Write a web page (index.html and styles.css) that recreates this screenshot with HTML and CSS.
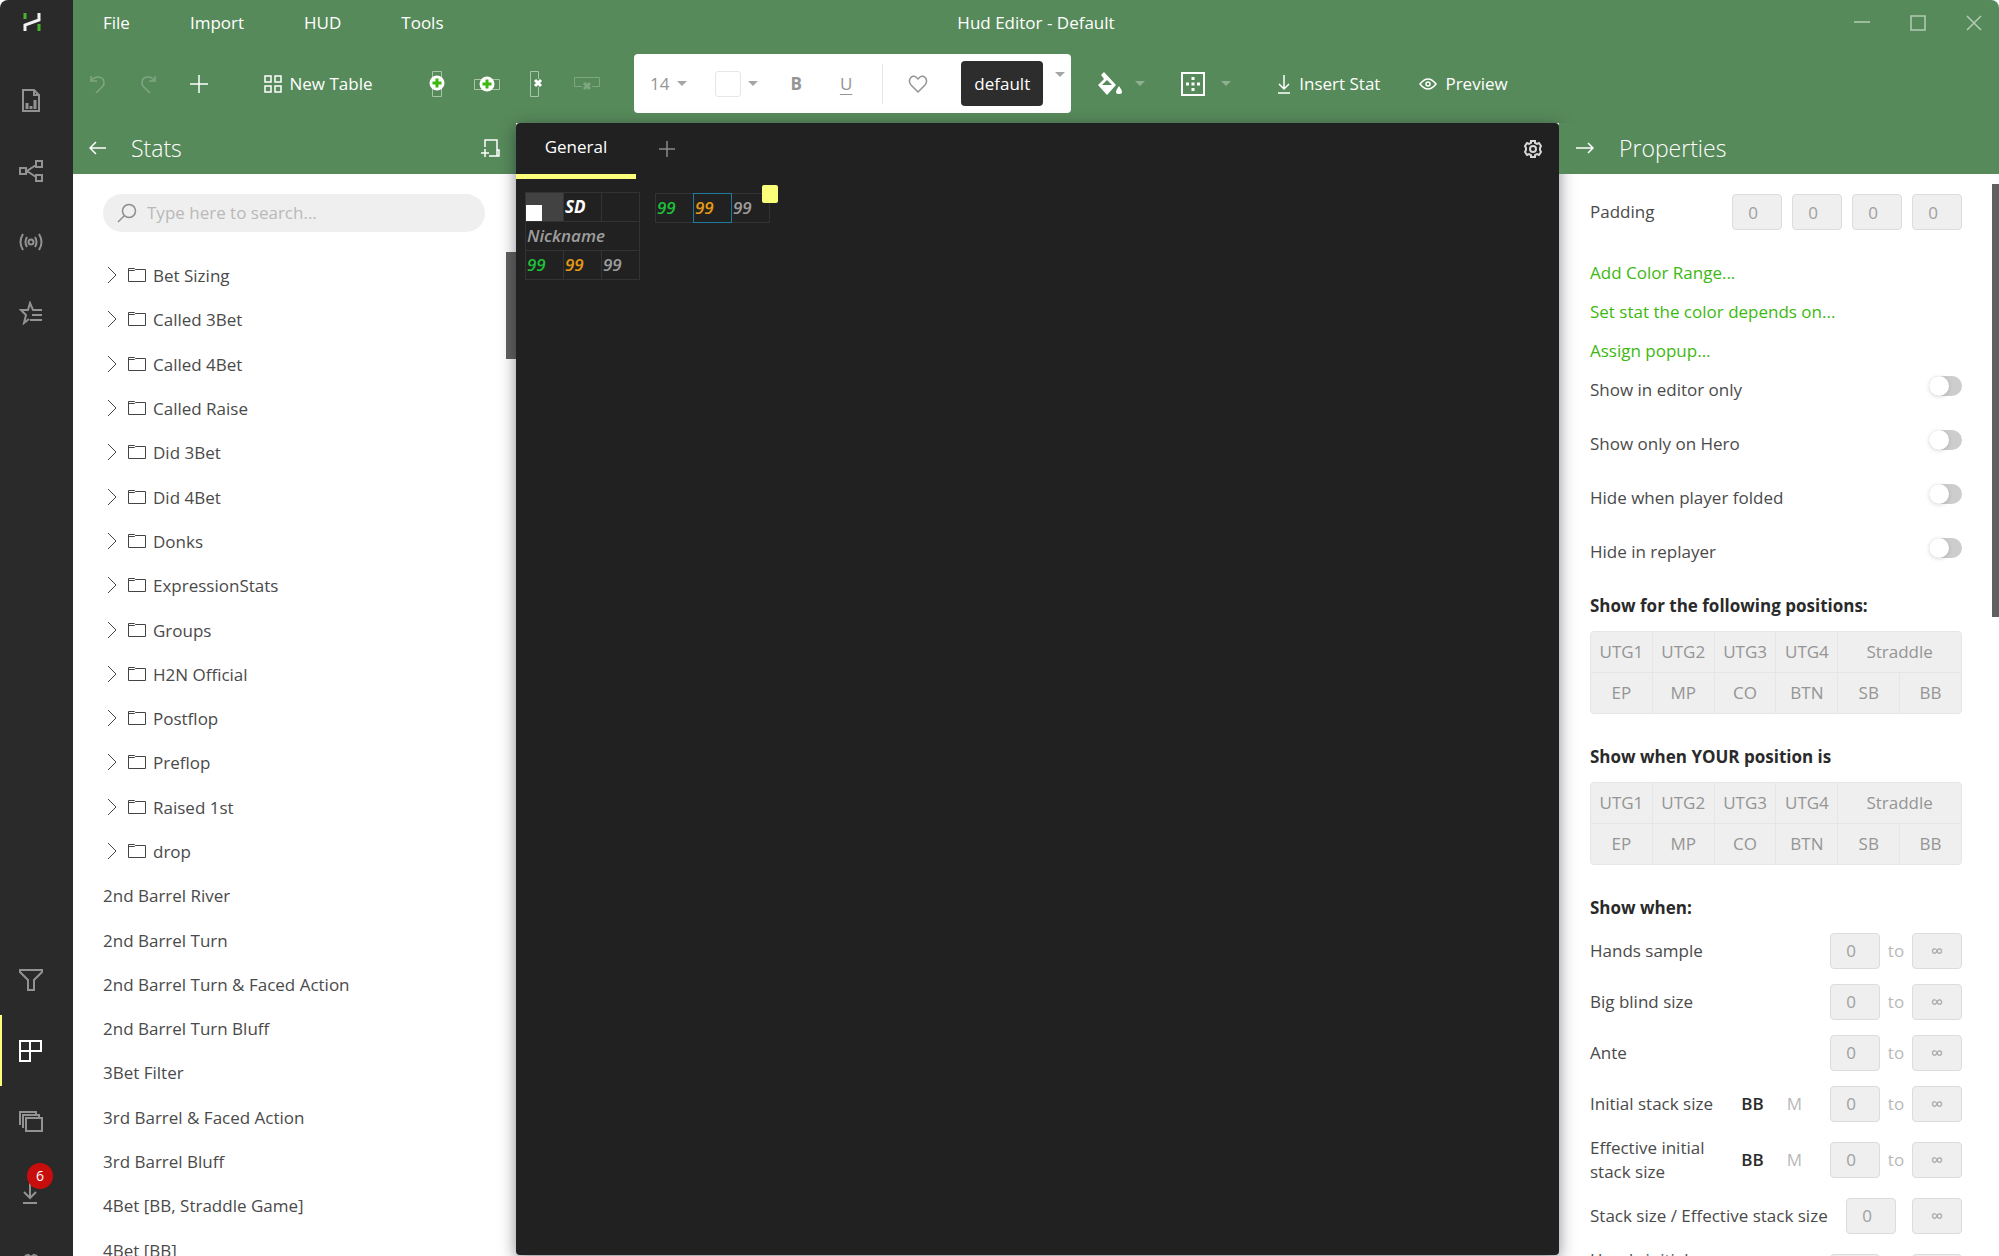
FILE: index.html
```html
<!DOCTYPE html>
<html lang="en">
<head>
<meta charset="UTF-8">
<meta name="viewport" content="width=device-width, initial-scale=1.0">
<title>Hud Editor - Default</title>
<link rel="stylesheet" href="styles.css">
</head>
<body>
<div class="app">

<nav class="rail">
    <a href="#" class="logo" aria-label="Home"><svg width="18" height="20" viewBox="0 0 18 20" fill="none" stroke-width="3"><path stroke="#4ab52c" d="M2 1v6M16 12v7"/><path stroke="#f2f2f2" d="M16 1v7L2 13v6"/></svg></a>
    <a href="#" aria-label="Reports"><svg width="24" height="24" viewBox="0 0 24 24" fill="none" stroke="currentColor" stroke-width="2"><path d="M4 2h11l5 5v16H4zM15 2v5h5"/><path stroke-width="3" d="M8 21v-6M12 21v-3M16 21v-9"/></svg></a>
    <a href="#" aria-label="Share"><svg width="24" height="24" viewBox="0 0 24 24" fill="none" stroke="currentColor" stroke-width="2"><path d="M1 9h6v6H1zM17 2h6v6h-6zM17 16h6v6h-6zM17 6L8 12l9 6"/></svg></a>
    <a href="#" aria-label="Live"><svg width="24" height="18" viewBox="0 0 24 18" fill="none" stroke="currentColor" stroke-width="2"><circle cx="12" cy="9" r="2.5"/><path d="M4 1q-5 8 0 16M8 4q-3 5 0 10M20 1q5 8 0 16M16 4q3 5 0 10"/></svg></a>
    <a href="#" aria-label="Favorites"><svg width="24" height="24" viewBox="0 0 24 24" fill="none" stroke="currentColor" stroke-width="2"><path d="M23 9h-9l-3-7-2 7H2l5 5-2 8 5-4M13 14h10M11 19h12"/></svg></a>
    <a href="#" class="rail-filter" aria-label="Filter"><svg width="24" height="22" viewBox="0 0 24 22" fill="none" stroke="currentColor" stroke-width="2"><path d="M1 1h22v2l-8 8v10H9V11L1 3z"/></svg></a>
    <a href="#" class="active" aria-label="Hud Editor"><svg width="24" height="24" viewBox="0 0 24 24" fill="none" stroke="currentColor" stroke-width="2"><path d="M2 2h21v10H2zM12 2v20H2V2"/></svg></a>
    <a href="#" aria-label="Tables"><svg width="24" height="22" viewBox="0 0 24 22" fill="none" stroke="currentColor" stroke-width="2"><path d="M7 7h16v13H7zM4 17V4h16v3M1 14V1h16v3"/></svg></a>
    <a href="#" class="downloads" aria-label="Downloads"><svg width="16" height="22" viewBox="0 0 16 22" fill="none" stroke="currentColor" stroke-width="2"><path d="M8 1v15M2 10l6 6 6-6M1 21h14"/></svg><span class="badge">6</span></a>
    <a href="#" aria-label="Settings"><svg width="24" height="22" viewBox="0 0 24 24" fill="none" stroke="currentColor" stroke-width="2"><circle cx="12" cy="12" r="4"/><path d="M9 2l3 2 3-2 3 1v4l4 2v6l-4 2v4l-3 1-3-2-3 2-3-1v-4l-4-2V9l4-2V3z"/></svg></a>
</nav>

<div class="main">
    <header class="header">
        <div class="titlebar">
            <nav class="menu">
                <a href="#">File</a>
                <a href="#">Import</a>
                <a href="#">HUD</a>
                <a href="#">Tools</a>
            </nav>
            <h1>Hud Editor - Default</h1>
            <div class="window-buttons">
                <button aria-label="Minimize"><svg width="16" height="16" viewBox="0 0 16 16" fill="none" stroke="currentColor" stroke-width="1.5"><path d="M0 7h16"/></svg></button>
                <button aria-label="Maximize"><svg width="16" height="16" viewBox="0 0 16 16" fill="none" stroke="currentColor" stroke-width="1.5"><path d="M1 1h14v14H1z"/></svg></button>
                <button aria-label="Close"><svg width="16" height="16" viewBox="0 0 16 16" fill="none" stroke="currentColor" stroke-width="1.5"><path d="M1 1l14 14M15 1L1 15"/></svg></button>
            </div>
        </div>
        <div class="toolbar">
            <div class="tools">
                <button class="faded" aria-label="Undo"><svg width="16" height="20" viewBox="0 0 16 20" fill="none" stroke="currentColor" stroke-width="1.5"><path d="M1 2v5h6M1 7q3-4 7-4 6 0 6 6 0 3-3 5l-5 5"/></svg></button>
                <button class="faded" aria-label="Redo"><svg width="16" height="20" viewBox="0 0 16 20" fill="none" stroke="currentColor" stroke-width="1.5"><path d="M15 2v5H9M15 7q-3-4-7-4-6 0-6 6 0 3 3 5l5 5"/></svg></button>
                <button aria-label="Add"><svg width="18" height="18" viewBox="0 0 18 18" fill="none" stroke="currentColor" stroke-width="1.5"><path d="M9 0v18M0 9h18"/></svg></button>
            </div>
            <button class="new-table"><svg width="18" height="18" viewBox="0 0 18 18" fill="none" stroke="currentColor" stroke-width="1.5"><path d="M1 1h6v6H1zM11 1h6v6h-6zM1 11h6v6H1zM11 11h6v6h-6z"/></svg>New Table</button>
            <div class="cells">
                <button aria-label="Insert row"><svg width="26" height="26" viewBox="0 0 26 26" fill="none"><path stroke="#a8c5aa" d="M8.500.5h9v25h-9z"/><circle cx="13" cy="12" r="7.5" fill="#fff"/><path stroke="#3db810" stroke-width="3" d="M13 7.500v9M8.500 12h9"/></svg></button>
                <button aria-label="Insert column"><svg width="26" height="26" viewBox="0 0 26 26" fill="none"><path stroke="#a8c5aa" d="M.5 8.500h25v10H.5z"/><circle cx="13" cy="13" r="7.500" fill="#fff"/><path stroke="#3db810" stroke-width="3" d="M13 8.500v9M8.500 13h9"/></svg></button>
                <button aria-label="Delete column"><svg width="26" height="26" viewBox="0 0 26 26" fill="none"><path stroke="#a8c5aa" d="M14.500 8V.5h-8v25h8V16"/><path stroke="#fff" stroke-width="3" d="M11 9l6 6M17 9l-6 6"/></svg></button>
                <button class="faded" aria-label="Delete row"><svg width="26" height="26" viewBox="0 0 26 26" fill="none" stroke="currentColor"><path d="M8 15.500H.5v-9h25v9H18"/><path stroke-width="3" d="M10 12l6 6M16 12l-6 6"/></svg></button>
            </div>
            <div class="format">
                <button class="size">14<i class="caret"></i></button>
                <button class="color" aria-label="Text color"><span class="swatch"></span><i class="caret"></i></button>
                <button class="bold">B</button>
                <button class="underline">U</button>
                <span class="divider"></span>
                <button aria-label="Favorite"><svg width="20" height="18" viewBox="0 0 20 18" fill="none" stroke="currentColor" stroke-width="1.5"><path d="M10 17L3 10C-1 5 4-1 8 2l2 2 2-2c4-3 9 3 5 8z"/></svg></button>
                <button class="style">default</button>
                <button class="style-more" aria-label="More styles"><i class="caret"></i></button>
            </div>
            <button class="fill" aria-label="Fill color"><svg width="26" height="24" viewBox="0 0 26 24"><path fill="currentColor" d="M7 0l12 13-9 10L1 13l6-6-3-4zM22 14q6 8 0 8t0-8"/><path fill="#578a5a" d="M5 13l5-5 5 5z"/></svg><i class="caret"></i></button>
            <button class="border" aria-label="Borders"><svg width="24" height="24" viewBox="0 0 24 24" fill="none" stroke="currentColor" stroke-width="2"><path d="M1 1h22v22H1z"/><path stroke-width="3" stroke-dasharray="3 2.500" d="M12 5v14M5 12h14"/></svg><i class="caret"></i></button>
            <button class="insert"><svg width="14" height="20" viewBox="0 0 14 20" fill="none" stroke="currentColor" stroke-width="1.500"><path d="M7 1v14M2 10l5 5 5-5M1 19h12"/></svg>Insert Stat</button>
            <button class="preview"><svg width="18" height="12" viewBox="0 0 18 12" fill="none" stroke="currentColor" stroke-width="1.500"><path d="M1 6q8-10 16 0-8 10-16 0z"/><circle cx="9" cy="6" r="2"/></svg>Preview</button>
        </div>
    </header>

    <div class="workspace">
        <aside class="panel stats">
            <div class="panel-head">
                <button aria-label="Back"><svg width="18" height="14" viewBox="0 0 18 14" fill="none" stroke="currentColor" stroke-width="1.500"><path d="M17 7H1M7 1L1 7l6 6"/></svg></button>
                <h2>Stats</h2>
                <button class="add-stat" aria-label="Add stat"><svg width="20" height="20" viewBox="0 0 20 20" fill="none" stroke="currentColor" stroke-width="1.500"><path d="M5 9V2h12v16h-8M17 12h2v6h-2M5 11v8M1 15h8"/></svg></button>
            </div>
            <div class="stats-body">
                <label class="search">
                    <svg width="20" height="20" viewBox="0 0 20 20" fill="none" stroke="currentColor" stroke-width="1.500"><circle cx="12" cy="8" r="6.500"/><path d="M7 13l-6 6"/></svg>
                    <input type="text" placeholder="Type here to search..." aria-label="Search stats">
                </label>
                <ul class="stat-list" id="statList"></ul>
            </div>
            <span class="thumb thumb-left"></span>
        </aside>

        <main class="canvas">
            <div class="tabs">
                <button class="tab active">General</button>
                <button class="tab-add" aria-label="Add tab"><svg width="16" height="16" viewBox="0 0 16 16" fill="none" stroke="currentColor" stroke-width="1.500"><path d="M8 0v16M0 8h16"/></svg></button>
                <button class="tab-settings" aria-label="Tab settings"><svg width="20" height="20" viewBox="0 0 20 20" fill="none" stroke="currentColor" stroke-width="2"><path d="M8 2h4v2l2 1 2-1 2 3-1 2v2l1 2-2 3-2-1-2 1v2H8v-2l-2-1-2 1-2-3 1-2V9L2 7l2-3 2 1 2-1z"/><circle cx="10" cy="10" r="3"/></svg></button>
            </div>
            <div class="hud">
                <table class="hud-table">
                    <tr><td class="note"><span></span></td><td class="white">SD</td><td></td></tr>
                    <tr><td class="gray" colspan="3">Nickname</td></tr>
                    <tr><td class="green">99</td><td class="orange">99</td><td class="gray">99</td></tr>
                </table>
                <div class="hud-selected">
                    <table class="hud-table">
                        <tr><td class="green">99</td><td class="orange selected">99</td><td class="gray">99</td></tr>
                    </table>
                    <span class="handle"></span>
                </div>
            </div>
        </main>

        <aside class="panel properties">
            <div class="panel-head">
                <button aria-label="Collapse"><svg width="20" height="14" viewBox="0 0 20 14" fill="none" stroke="currentColor" stroke-width="1.500"><path d="M1 7h17M13 2l5 5-5 5"/></svg></button>
                <h2>Properties</h2>
            </div>
            <div class="properties-body">
                <div class="row padding-row">
                    <span class="name">Padding</span>
                    <input type="text" value="0" aria-label="Padding left">
                    <input type="text" value="0" aria-label="Padding top">
                    <input type="text" value="0" aria-label="Padding right">
                    <input type="text" value="0" aria-label="Padding bottom">
                </div>
                <div class="links">
                    <a href="#">Add Color Range...</a>
                    <a href="#">Set stat the color depends on...</a>
                    <a href="#">Assign popup...</a>
                </div>
                <label class="switch">Show in editor only<input type="checkbox"></label>
                <label class="switch">Show only on Hero<input type="checkbox"></label>
                <label class="switch">Hide when player folded<input type="checkbox"></label>
                <label class="switch">Hide in replayer<input type="checkbox"></label>

                <h3>Show for the following positions:</h3>
                <div class="positions">
                    <button>UTG1</button><button>UTG2</button><button>UTG3</button><button>UTG4</button><button class="wide">Straddle</button>
                    <button>EP</button><button>MP</button><button>CO</button><button>BTN</button><button>SB</button><button>BB</button>
                </div>

                <h3>Show when YOUR position is</h3>
                <div class="positions">
                    <button>UTG1</button><button>UTG2</button><button>UTG3</button><button>UTG4</button><button class="wide">Straddle</button>
                    <button>EP</button><button>MP</button><button>CO</button><button>BTN</button><button>SB</button><button>BB</button>
                </div>

                <h3>Show when:</h3>
                <div class="ranges">
                    <div class="row"><span class="name">Hands sample</span><input type="text" value="0" aria-label="Hands sample from"><span class="to">to</span><input type="text" class="max" value="∞" aria-label="Hands sample to"></div>
                    <div class="row"><span class="name">Big blind size</span><input type="text" value="0" aria-label="Big blind size from"><span class="to">to</span><input type="text" class="max" value="∞" aria-label="Big blind size to"></div>
                    <div class="row"><span class="name">Ante</span><input type="text" value="0" aria-label="Ante from"><span class="to">to</span><input type="text" class="max" value="∞" aria-label="Ante to"></div>
                    <div class="row"><span class="name">Initial stack size</span><button class="unit on">BB</button><button class="unit">M</button><input type="text" value="0" aria-label="Initial stack size from"><span class="to">to</span><input type="text" class="max" value="∞" aria-label="Initial stack size to"></div>
                    <div class="row tall"><span class="name">Effective initial<br>stack size</span><button class="unit on">BB</button><button class="unit">M</button><input type="text" value="0" aria-label="Effective initial stack size from"><span class="to">to</span><input type="text" class="max" value="∞" aria-label="Effective initial stack size to"></div>
                    <div class="row"><span class="name">Stack size / Effective stack size</span><input type="text" value="0" aria-label="Stack size from"><span class="gap"></span><input type="text" class="max" value="∞" aria-label="Stack size to"></div>
                    <div class="row tall"><span class="name">Hero's initial<br>stack size</span><input type="text" value="0" aria-label="Hero's initial stack size from"><span class="to">to</span><input type="text" class="max" value="∞" aria-label="Hero's initial stack size to"></div>
                </div>
            </div>
            <span class="thumb thumb-right"></span>
        </aside>
    </div>
</div>

</div>

<script>
    var folders = ["Bet Sizing", "Called 3Bet", "Called 4Bet", "Called Raise", "Did 3Bet", "Did 4Bet", "Donks",
        "ExpressionStats", "Groups", "H2N Official", "Postflop", "Preflop", "Raised 1st", "drop"];
    var stats = ["2nd Barrel River", "2nd Barrel Turn", "2nd Barrel Turn & Faced Action", "2nd Barrel Turn Bluff",
        "3Bet Filter", "3rd Barrel & Faced Action", "3rd Barrel Bluff", "4Bet [BB, Straddle Game]", "4Bet [BB]"];
    var folderIcon = '<svg width="40" height="20" viewBox="0 0 40 20" fill="none" stroke="currentColor">' +
        '<path d="M2 1l8 8-8 8"/><path d="M22.500 15.500v-13h6l1 1h10v12zM22.500 4.500h6l1-1"/></svg>';
    var list = document.getElementById("statList");

    function addItem(name, icon) {
        var item = document.createElement("li");
        item.innerHTML = icon;
        item.appendChild(document.createTextNode(name));
        list.appendChild(item);
    }

    folders.forEach(function(name) { addItem(name, folderIcon); });
    stats.forEach(function(name) { addItem(name, ""); });
</script>
</body>
</html>
```
FILE: styles.css
```css
* {
    box-sizing: border-box;
}
body {
    margin: 0;
    font-family: "Open Sans", "Noto Sans", sans-serif;
    font-size: 17px;
    line-height: 24px;
    color: #4a4a4a;
    background: #fff;
}
button {
    display: flex;
    align-items: center;
    justify-content: center;
    padding: 0;
    border: 0;
    background: none;
    color: inherit;
    font: inherit;
    white-space: nowrap;
}
a {
    color: inherit;
    text-decoration: none;
}
h1, h2, h3, ul {
    margin: 0;
    padding: 0;
}
svg {
    display: block;
    flex: none;
}
.app {
    display: flex;
    height: 100vh;
    overflow: hidden;
    border-radius: 8px 8px 0 0;
}

/* left rail */
.rail {
    flex: none;
    display: flex;
    flex-direction: column;
    width: 73px;
    margin-bottom: -43px;
    background: #2a2a2a;
    color: #929292;
}
.rail a {
    flex: none;
    display: flex;
    align-items: center;
    height: 71px;
    padding-left: 19px;
}
.rail .logo {
    height: 64px;
    padding: 0 0 20px 23px;
}
.rail .rail-filter {
    margin-top: auto;
}
.rail .active {
    color: #fff;
    padding-left: 16px;
    border-left: 2px solid #fbff7a;
}
.rail .downloads {
    position: relative;
    padding-left: 22px;
}
.badge {
    position: absolute;
    top: 6px;
    left: 27px;
    width: 26px;
    height: 26px;
    border-radius: 50%;
    background: #c80d0d;
    color: #fff;
    font-size: 14px;
    line-height: 26px;
    text-align: center;
}

/* header */
.main {
    flex: 1;
    min-width: 0;
    display: flex;
    flex-direction: column;
}
.header {
    flex: none;
    background: #578a5a;
    color: #fff;
}
.titlebar {
    display: grid;
    grid-template-columns: 1fr auto 1fr;
    align-items: center;
    height: 46px;
    padding: 0 17px;
}
.menu {
    display: flex;
    gap: 60px;
    padding-left: 13px;
}
h1 {
    font-size: 17px;
    font-weight: 400;
}
.window-buttons {
    display: flex;
    justify-content: flex-end;
    gap: 40px;
    color: #b4ccb5;
}
.toolbar {
    display: flex;
    align-items: center;
    height: 77px;
    padding: 0 0 2px 17px;
}
.tools {
    display: flex;
    gap: 34px;
}
.faded {
    color: #7fa682;
}
.new-table, .insert, .preview {
    gap: 8px;
}
.new-table {
    width: 108px;
    margin-left: 56px;
}
.cells {
    display: flex;
    gap: 24px;
    margin-left: 52px;
}
.format {
    display: flex;
    align-items: center;
    height: 59px;
    margin-left: 34px;
    padding: 0 6px 0 16px;
    border-radius: 4px;
    background: #fff;
    color: #959595;
}
.caret {
    width: 0;
    border: 5px solid transparent;
    border-top-color: #a5a5a5;
    border-bottom: 0;
}
.size {
    gap: 8px;
}
.color {
    gap: 7px;
    margin-left: 28px;
}
.swatch {
    width: 26px;
    height: 26px;
    border: 1px solid #e6e6e6;
    border-radius: 3px;
}
.bold {
    margin-left: 32px;
    font-weight: 700;
}
.underline {
    margin: 0 30px 0 38px;
    text-decoration: underline;
    text-underline-offset: 4px;
}
.divider {
    width: 1px;
    height: 40px;
    margin-right: 25px;
    background: #e6e6e6;
}
.style {
    width: 82px;
    height: 45px;
    margin-left: 33px;
    border-radius: 4px;
    background: #2d2d2d;
    color: #fff;
}
.style-more {
    align-items: flex-start;
    height: 20px;
    margin: 0 0 3px 12px;
}
.fill {
    gap: 12px;
    margin-left: 26px;
}
.border {
    gap: 16px;
    margin-left: 36px;
}
.fill .caret, .border .caret {
    border-top-color: #8eb090;
}
.insert {
    margin-left: 46px;
}
.preview {
    margin-left: 39px;
}

/* workspace */
.workspace {
    flex: 1;
    min-height: 0;
    display: flex;
}
.panel {
    position: relative;
    flex: none;
    display: flex;
    flex-direction: column;
    overflow: hidden;
}
.stats {
    width: 443px;
}
.properties {
    width: 440px;
}
.panel-head {
    flex: none;
    display: flex;
    align-items: center;
    gap: 24px;
    height: 51px;
    padding: 0 16px 2px;
    background: #578a5a;
    color: #fff;
}
h2 {
    font-size: 23px;
    font-weight: 300;
    line-height: 32px;
}
.add-stat {
    margin-left: auto;
}
.stats-body {
    flex: 1;
    min-height: 0;
    display: flex;
    flex-direction: column;
    padding: 20px 31px 0 30px;
}
.search {
    flex: none;
    display: flex;
    align-items: center;
    gap: 10px;
    height: 38px;
    margin-bottom: 22px;
    padding: 0 14px;
    border-radius: 19px;
    background: #efefef;
    color: #8e8e8e;
}
.search input {
    flex: 1;
    min-width: 0;
    padding: 0;
    border: 0;
    outline: 0;
    background: none;
    font: inherit;
}
.search input::placeholder {
    color: #b9b9b9;
}
.stat-list {
    flex: 1;
    display: flex;
    flex-direction: column;
    margin-bottom: -17px;
    list-style: none;
}
.stat-list li {
    flex: 1;
    display: flex;
    align-items: center;
    gap: 7px;
    min-height: 44px;
    white-space: nowrap;
}
.stat-list svg {
    margin-left: 3px;
    color: #444;
}
.thumb {
    position: absolute;
    right: 0;
    background: #606060;
}
.thumb-left {
    top: 129px;
    width: 10px;
    height: 107px;
}
.thumb-right {
    top: 61px;
    width: 7px;
    height: 433px;
}

/* canvas */
.canvas {
    position: relative;
    flex: 1;
    min-width: 0;
    margin-bottom: 1px;
    border-radius: 4px;
    background: #212121;
    box-shadow: 0 4px 16px rgba(20, 20, 40, .5);
}
.tabs {
    display: flex;
    align-items: center;
    height: 56px;
    padding-right: 16px;
    color: #d8d8d8;
}
.tab {
    width: 120px;
    height: 56px;
    padding-bottom: 3px;
    color: #fff;
}
.tab.active {
    border-bottom: 5px solid #fbff7a;
}
.tab-add {
    margin: 0 auto 4px 23px;
    color: #8a8a8a;
}
.tab-settings {
    margin-bottom: 4px;
}
.hud {
    display: flex;
    align-items: flex-start;
    gap: 15px;
    padding: 13px 9px;
}
.hud-table {
    border-collapse: collapse;
    font-size: 17px;
    font-style: italic;
    font-weight: 600;
    line-height: 24px;
}
.hud-table td {
    width: 38px;
    min-width: 38px;
    height: 29px;
    padding: 0 1px;
    border: 1px solid #333;
}
.hud-table .note {
    background: #424242;
    padding: 0;
    vertical-align: bottom;
}
.note span {
    display: block;
    width: 16px;
    height: 16px;
    background: #fff;
}
.hud-table .white {
    color: #fff;
    font-weight: 700;
}
.gray { color: #9d9d9d; }
.green { color: #1fbf3a; }
.orange { color: #e59a16; }
.hud-table .selected {
    border: 1px double #217a9c;
}
.hud-selected {
    position: relative;
    padding-top: 1px;
}
.handle {
    position: absolute;
    top: -7px;
    right: -8px;
    width: 16px;
    height: 18px;
    border-radius: 2px;
    background: #fbff7a;
}

/* properties */
.properties-body {
    padding: 20px 37px 0 31px;
}
.row {
    display: flex;
    align-items: center;
    height: 51px;
}
.name {
    flex: 1;
    white-space: nowrap;
}
.row input {
    width: 50px;
    height: 36px;
    padding: 0 8px 0 0;
    border: 1px solid #dcdcdc;
    border-radius: 4px;
    background: #efefef;
    color: #a0a0a0;
    font: inherit;
    text-align: center;
}
.row .max {
    padding: 0;
}
.padding-row {
    gap: 10px;
    height: 36px;
}
.links {
    display: flex;
    flex-direction: column;
    align-items: flex-start;
    gap: 15px;
    padding-top: 31px;
    color: #3db810;
}
.switch {
    display: flex;
    align-items: center;
    justify-content: space-between;
    height: 54px;
}
.switch input {
    appearance: none;
    width: 33px;
    height: 20px;
    margin: 0 0 8px;
    border-radius: 10px;
    background: #cdcdcd;
}
.switch input::before {
    content: "";
    display: block;
    width: 20px;
    height: 20px;
    border-radius: 50%;
    background: #fff;
    box-shadow: 0 1px 4px rgba(0, 0, 0, .15);
}
.switch input:checked::before {
    margin-left: 13px;
}
h3 {
    padding-top: 15px;
    color: #2a2a2a;
    font-size: 17px;
    font-weight: 700;
}
.positions {
    display: grid;
    grid-template-columns: repeat(6, 1fr);
    gap: 1px;
    margin: 13px 0 16px;
    border: 1px solid #e6e6e6;
    border-radius: 4px;
    background: #e6e6e6;
    overflow: hidden;
}
.positions button {
    height: 40px;
    background: #efefef;
    color: #959595;
}
.positions .wide {
    grid-column: span 2;
}
.ranges {
    padding-top: 5px;
}
.ranges .tall {
    height: 61px;
}
.to {
    width: 32px;
    color: #b9b9b9;
    text-align: center;
}
.gap {
    width: 16px;
}
.unit {
    margin-right: 23px;
    color: #b9b9b9;
}
.unit.on {
    color: #2a2a2a;
    font-weight: 600;
}
.unit + input {
    margin-left: 5px;
}
```
